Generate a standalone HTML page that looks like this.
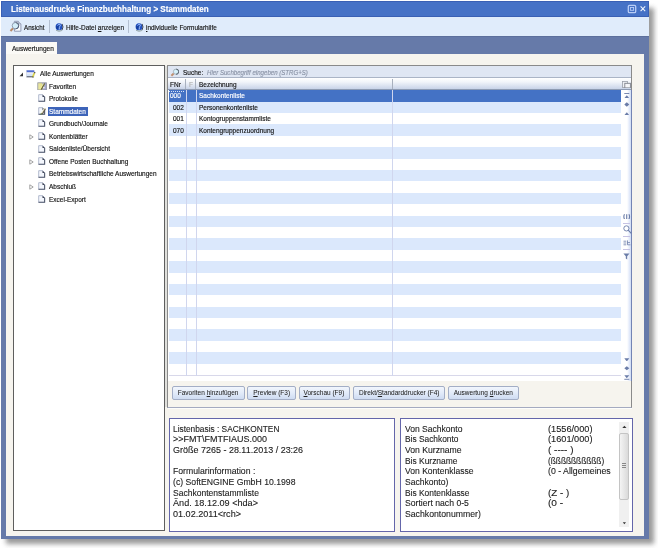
<!DOCTYPE html><html><head><meta charset="utf-8"><style>
*{margin:0;padding:0;box-sizing:border-box}
html,body{width:658px;height:548px;overflow:hidden;background:#fff;font-family:"Liberation Sans",sans-serif;position:relative}
.a{position:absolute}
.t{position:absolute;white-space:nowrap;color:#141414;-webkit-text-stroke:.16px currentColor}
.it{position:absolute;white-space:nowrap;color:#222}
</style></head><body><div id="root" style="position:absolute;left:0;top:0;width:658px;height:548px;overflow:hidden;background:#fff">
<div class="a" style="left:6px;top:8px;width:648px;height:536px;background:#808080;filter:blur(2.6px);opacity:.8"></div>
<div class="a" style="left:1px;top:1px;width:648px;height:538px;background:#667aa9"></div>
<div class="a" style="left:1px;top:1px;width:648px;height:16px;background:#4672c6;border:1px solid #3a60b4"></div>
<div class="t" style="left:10.70px;top:3.82px;font-size:8.6px;line-height:10px;transform:scaleX(0.9377);transform-origin:0 0;color:#fff;font-weight:bold">Listenausdrucke Finanzbuchhaltung &gt; Stammdaten</div>
<div class="a" style="left:1px;top:17px;width:648px;height:19px;background:#e0ecfb"></div>
<div class="a" style="left:1px;top:36px;width:648px;height:1px;background:#5c6f9c"></div>
<div class="t" style="left:23.90px;top:22.57px;font-size:7.3px;line-height:10px;transform:scaleX(0.8522);transform-origin:0 0">Ansicht</div>
<div class="a" style="left:48.5px;top:20px;width:1px;height:13px;background:#b4c0d2"></div>
<div class="t" style="left:65.50px;top:22.57px;font-size:7.3px;line-height:10px;transform:scaleX(0.8825);transform-origin:0 0">Hilfe-Datei <u>a</u>nzeigen</div>
<div class="a" style="left:128px;top:20px;width:1px;height:13px;background:#b4c0d2"></div>
<div class="t" style="left:145.50px;top:22.57px;font-size:7.3px;line-height:10px;transform:scaleX(0.8771);transform-origin:0 0"><u>i</u>ndividuelle Formularhilfe</div>
<div class="a" style="left:6px;top:42px;width:51px;height:13px;background:#fbfaf6"></div>
<div class="a" style="left:6px;top:54px;width:638px;height:482px;background:#f6f4ee"></div>
<div class="t" style="left:11.70px;top:44.07px;font-size:7.3px;line-height:10px;transform:scaleX(0.8981);transform-origin:0 0">Auswertungen</div>
<div class="a" style="left:13px;top:65px;width:152px;height:466px;background:#fff;border:1px solid #5e5e5e"></div>
<div class="a" style="left:165px;top:66px;width:2px;height:341px;background:#e0e0dc"></div>
<div class="t" style="left:39.50px;top:69.07px;font-size:7.3px;line-height:10px;transform:scaleX(0.89);transform-origin:0 0">Alle Auswertungen</div>
<div class="t" style="left:49.30px;top:81.62px;font-size:7.3px;line-height:10px;transform:scaleX(0.89);transform-origin:0 0">Favoriten</div>
<div class="t" style="left:49.30px;top:94.17px;font-size:7.3px;line-height:10px;transform:scaleX(0.89);transform-origin:0 0">Protokolle</div>
<div class="a" style="left:48.2px;top:107.0px;width:39.7px;height:8.8px;background:#3d64b9"></div>
<div class="t" style="left:49.30px;top:106.72px;font-size:7.3px;line-height:10px;transform:scaleX(0.89);transform-origin:0 0;color:#fff">Stammdaten</div>
<div class="t" style="left:49.30px;top:119.27px;font-size:7.3px;line-height:10px;transform:scaleX(0.89);transform-origin:0 0">Grundbuch/Journale</div>
<div class="t" style="left:49.30px;top:131.82px;font-size:7.3px;line-height:10px;transform:scaleX(0.89);transform-origin:0 0">Kontenbl&auml;tter</div>
<div class="t" style="left:49.30px;top:144.37px;font-size:7.3px;line-height:10px;transform:scaleX(0.89);transform-origin:0 0">Saldenliste/&Uuml;bersicht</div>
<div class="t" style="left:49.30px;top:156.92px;font-size:7.3px;line-height:10px;transform:scaleX(0.89);transform-origin:0 0">Offene Posten Buchhaltung</div>
<div class="t" style="left:49.30px;top:169.47px;font-size:7.3px;line-height:10px;transform:scaleX(0.89);transform-origin:0 0">Betriebswirtschaftliche Auswertungen</div>
<div class="t" style="left:49.30px;top:182.02px;font-size:7.3px;line-height:10px;transform:scaleX(0.89);transform-origin:0 0">Abschlu&szlig;</div>
<div class="t" style="left:49.30px;top:194.57px;font-size:7.3px;line-height:10px;transform:scaleX(0.89);transform-origin:0 0">Excel-Export</div>
<div class="a" style="left:167px;top:65px;width:465px;height:343px;background:#f6f4ee;border:1px solid #8a8a8a;border-bottom-color:#a4aac0"></div>
<div class="a" style="left:168px;top:408px;width:464px;height:1px;background:#fdfdfb"></div>
<div class="a" style="left:168px;top:66px;width:463px;height:12px;background:#dfe6f3;border-bottom:1px solid #aab4c6"></div>
<div class="t" style="left:183.10px;top:67.57px;font-size:7.3px;line-height:10px;transform:scaleX(0.8891);transform-origin:0 0">Suche:</div>
<div class="t" style="left:207.20px;top:67.57px;font-size:7.3px;line-height:10px;transform:scaleX(0.8363);transform-origin:0 0;color:#8a93a6;font-style:italic">Hier Suchbegriff eingeben (STRG+S)</div>
<div class="a" style="left:168px;top:78px;width:463px;height:12px;background:linear-gradient(#ffffff,#f2f5fa 35%,#c8d3e8);border-bottom:1px solid #8e9bb3"></div>
<div class="t" style="left:169.80px;top:80.17px;font-size:7.3px;line-height:10px;transform:scaleX(0.89);transform-origin:0 0">FNr</div>
<div class="t" style="left:188.80px;top:80.17px;font-size:7.3px;line-height:10px;transform:scaleX(0.89);transform-origin:0 0;color:#b0b0b0">F</div>
<div class="t" style="left:198.70px;top:80.17px;font-size:7.3px;line-height:10px;transform:scaleX(0.89);transform-origin:0 0">Bezeichnung</div>
<div class="a" style="left:185px;top:79px;width:1px;height:10px;background:#a8b0be"></div>
<div class="a" style="left:195px;top:79px;width:1px;height:10px;background:#a8b0be"></div>
<div class="a" style="left:392px;top:79px;width:1px;height:10px;background:#a8b0be"></div>
<div class="a" style="left:168px;top:90px;width:453px;height:291px;background:#fff"></div>
<div class="a" style="left:169px;top:90.3px;width:452px;height:11.39px;background:#4472c5"></div>
<div class="a" style="left:169px;top:101.69px;width:452px;height:11.39px;background:#dbe8fc"></div>
<div class="a" style="left:169px;top:113.08px;width:452px;height:11.39px;background:#ffffff"></div>
<div class="a" style="left:169px;top:124.47px;width:452px;height:11.39px;background:#dbe8fc"></div>
<div class="a" style="left:169px;top:135.86px;width:452px;height:11.39px;background:#ffffff"></div>
<div class="a" style="left:169px;top:147.25px;width:452px;height:11.39px;background:#dbe8fc"></div>
<div class="a" style="left:169px;top:158.64px;width:452px;height:11.39px;background:#ffffff"></div>
<div class="a" style="left:169px;top:170.03px;width:452px;height:11.39px;background:#dbe8fc"></div>
<div class="a" style="left:169px;top:181.42px;width:452px;height:11.39px;background:#ffffff"></div>
<div class="a" style="left:169px;top:192.81px;width:452px;height:11.39px;background:#dbe8fc"></div>
<div class="a" style="left:169px;top:204.2px;width:452px;height:11.39px;background:#ffffff"></div>
<div class="a" style="left:169px;top:215.59px;width:452px;height:11.39px;background:#dbe8fc"></div>
<div class="a" style="left:169px;top:226.98px;width:452px;height:11.39px;background:#ffffff"></div>
<div class="a" style="left:169px;top:238.37px;width:452px;height:11.39px;background:#dbe8fc"></div>
<div class="a" style="left:169px;top:249.76px;width:452px;height:11.39px;background:#ffffff"></div>
<div class="a" style="left:169px;top:261.15px;width:452px;height:11.39px;background:#dbe8fc"></div>
<div class="a" style="left:169px;top:272.54px;width:452px;height:11.39px;background:#ffffff"></div>
<div class="a" style="left:169px;top:283.93px;width:452px;height:11.39px;background:#dbe8fc"></div>
<div class="a" style="left:169px;top:295.32px;width:452px;height:11.39px;background:#ffffff"></div>
<div class="a" style="left:169px;top:306.71px;width:452px;height:11.39px;background:#dbe8fc"></div>
<div class="a" style="left:169px;top:318.1px;width:452px;height:11.39px;background:#ffffff"></div>
<div class="a" style="left:169px;top:329.49px;width:452px;height:11.39px;background:#dbe8fc"></div>
<div class="a" style="left:169px;top:340.88px;width:452px;height:11.39px;background:#ffffff"></div>
<div class="a" style="left:169px;top:352.27px;width:452px;height:11.39px;background:#dbe8fc"></div>
<div class="a" style="left:169px;top:363.66px;width:452px;height:11.39px;background:#ffffff"></div>
<div class="a" style="left:169px;top:375.2px;width:452px;height:1px;background:#d8d8ea"></div>
<div class="a" style="left:169px;top:91px;width:16px;height:1px;background-image:linear-gradient(90deg,#fff 50%,transparent 50%);background-size:2px 1px;opacity:.8"></div>
<div class="a" style="left:631px;top:90px;width:1px;height:291px;background:#7384b4"></div>
<div class="a" style="left:186px;top:90px;width:1px;height:286px;background:#d0d6ee"></div>
<div class="a" style="left:195.5px;top:90px;width:1px;height:286px;background:#d0d6ee"></div>
<div class="a" style="left:392px;top:90px;width:1px;height:286px;background:#d0d6ee"></div>
<div class="t" style="left:170.20px;top:91.47px;font-size:7.3px;line-height:10px;transform:scaleX(0.89);transform-origin:0 0;color:#fff">000</div>
<div class="t" style="left:198.80px;top:91.47px;font-size:7.3px;line-height:10px;transform:scaleX(0.89);transform-origin:0 0;color:#fff">Sachkontenliste</div>
<div class="t" style="left:172.90px;top:102.86px;font-size:7.3px;line-height:10px;transform:scaleX(0.89);transform-origin:0 0">002</div>
<div class="t" style="left:198.80px;top:102.86px;font-size:7.3px;line-height:10px;transform:scaleX(0.89);transform-origin:0 0">Personenkontenliste</div>
<div class="t" style="left:172.90px;top:114.25px;font-size:7.3px;line-height:10px;transform:scaleX(0.89);transform-origin:0 0">001</div>
<div class="t" style="left:198.80px;top:114.25px;font-size:7.3px;line-height:10px;transform:scaleX(0.89);transform-origin:0 0">Kontogruppenstammliste</div>
<div class="t" style="left:172.90px;top:125.64px;font-size:7.3px;line-height:10px;transform:scaleX(0.89);transform-origin:0 0">070</div>
<div class="t" style="left:198.80px;top:125.64px;font-size:7.3px;line-height:10px;transform:scaleX(0.89);transform-origin:0 0">Kontengruppenzuordnung</div>
<div class="a" style="left:621px;top:90px;width:10px;height:291px;background:linear-gradient(90deg,#ffffff 60%,#e8eefb 80%,#cfdcf4)"></div>
<div class="a" style="left:171.6px;top:386px;width:73.0px;height:14px;border:1px solid #a3aec6;border-radius:2px;background:linear-gradient(#f2f6fd,#e2ebf9 50%,#cfdcf2)"></div>
<div class="t" style="left:171.6px;width:73.0px;top:387.67px;line-height:10px;font-size:7.3px;text-align:center;-webkit-text-stroke:.04px currentColor;color:#222"><span style="display:inline-block;transform:scaleX(0.89)">Favoriten <u>h</u>inzuf&uuml;gen</span></div>
<div class="a" style="left:247.4px;top:386px;width:48.3px;height:14px;border:1px solid #a3aec6;border-radius:2px;background:linear-gradient(#f2f6fd,#e2ebf9 50%,#cfdcf2)"></div>
<div class="t" style="left:247.4px;width:48.3px;top:387.67px;line-height:10px;font-size:7.3px;text-align:center;-webkit-text-stroke:.04px currentColor;color:#222"><span style="display:inline-block;transform:scaleX(0.89)"><u>P</u>review (F3)</span></div>
<div class="a" style="left:298.5px;top:386px;width:51.7px;height:14px;border:1px solid #a3aec6;border-radius:2px;background:linear-gradient(#f2f6fd,#e2ebf9 50%,#cfdcf2)"></div>
<div class="t" style="left:298.5px;width:51.7px;top:387.67px;line-height:10px;font-size:7.3px;text-align:center;-webkit-text-stroke:.04px currentColor;color:#222"><span style="display:inline-block;transform:scaleX(0.89)"><u>V</u>orschau (F9)</span></div>
<div class="a" style="left:352.8px;top:386px;width:92.7px;height:14px;border:1px solid #a3aec6;border-radius:2px;background:linear-gradient(#f2f6fd,#e2ebf9 50%,#cfdcf2)"></div>
<div class="t" style="left:352.8px;width:92.7px;top:387.67px;line-height:10px;font-size:7.3px;text-align:center;-webkit-text-stroke:.04px currentColor;color:#222"><span style="display:inline-block;transform:scaleX(0.89)">Direkt/<u>S</u>tandarddrucker (F4)</span></div>
<div class="a" style="left:447.9px;top:386px;width:71.4px;height:14px;border:1px solid #a3aec6;border-radius:2px;background:linear-gradient(#f2f6fd,#e2ebf9 50%,#cfdcf2)"></div>
<div class="t" style="left:447.9px;width:71.4px;top:387.67px;line-height:10px;font-size:7.3px;text-align:center;-webkit-text-stroke:.04px currentColor;color:#222"><span style="display:inline-block;transform:scaleX(0.89)">Auswertung <u>d</u>rucken</span></div>
<div class="a" style="left:169px;top:418px;width:226px;height:114px;background:#fff;border:1px solid #6466aa"></div>
<div class="a" style="left:400px;top:418px;width:233px;height:114px;background:#fff;border:1px solid #6466aa"></div>
<div class="t" style="left:173.30px;top:423.67px;font-size:9.6px;line-height:10px;transform:scaleX(0.8677);transform-origin:0 0;color:#1c1c1c;-webkit-text-stroke:.12px currentColor">Listenbasis : SACHKONTEN</div>
<div class="t" style="left:173.30px;top:434.33px;font-size:9.6px;line-height:10px;transform:scaleX(0.9388);transform-origin:0 0;color:#1c1c1c;-webkit-text-stroke:.12px currentColor">&gt;&gt;FMT\FMTFIAUS.000</div>
<div class="t" style="left:173.30px;top:444.99px;font-size:9.6px;line-height:10px;transform:scaleX(0.9358);transform-origin:0 0;color:#1c1c1c;-webkit-text-stroke:.12px currentColor">Gr&ouml;&szlig;e 7265 - 28.11.2013 / 23:26</div>
<div class="t" style="left:173.30px;top:466.31px;font-size:9.6px;line-height:10px;transform:scaleX(0.9027);transform-origin:0 0;color:#1c1c1c;-webkit-text-stroke:.12px currentColor">Formularinformation :</div>
<div class="t" style="left:173.30px;top:476.97px;font-size:9.6px;line-height:10px;transform:scaleX(0.9045);transform-origin:0 0;color:#1c1c1c;-webkit-text-stroke:.12px currentColor">(c) SoftENGINE GmbH 10.1998</div>
<div class="t" style="left:173.30px;top:487.63px;font-size:9.6px;line-height:10px;transform:scaleX(0.89);transform-origin:0 0;color:#1c1c1c;-webkit-text-stroke:.12px currentColor">Sachkontenstammliste</div>
<div class="t" style="left:173.30px;top:498.29px;font-size:9.6px;line-height:10px;transform:scaleX(0.9484);transform-origin:0 0;color:#1c1c1c;-webkit-text-stroke:.12px currentColor">&Auml;nd. 18.12.09 &lt;hda&gt;</div>
<div class="t" style="left:173.30px;top:508.95px;font-size:9.6px;line-height:10px;transform:scaleX(0.9465);transform-origin:0 0;color:#1c1c1c;-webkit-text-stroke:.12px currentColor">01.02.2011&lt;rch&gt;</div>
<div class="t" style="left:404.50px;top:423.67px;font-size:9.6px;line-height:10px;transform:scaleX(0.8908);transform-origin:0 0;color:#1c1c1c;-webkit-text-stroke:.12px currentColor">Von Sachkonto</div>
<div class="t" style="left:547.70px;top:423.67px;font-size:9.6px;line-height:10px;transform:scaleX(0.9589);transform-origin:0 0;color:#1c1c1c;-webkit-text-stroke:.12px currentColor">(1556/000)</div>
<div class="t" style="left:404.50px;top:434.33px;font-size:9.6px;line-height:10px;transform:scaleX(0.8721);transform-origin:0 0;color:#1c1c1c;-webkit-text-stroke:.12px currentColor">Bis Sachkonto</div>
<div class="t" style="left:547.70px;top:434.33px;font-size:9.6px;line-height:10px;transform:scaleX(0.9589);transform-origin:0 0;color:#1c1c1c;-webkit-text-stroke:.12px currentColor">(1601/000)</div>
<div class="t" style="left:404.50px;top:444.99px;font-size:9.6px;line-height:10px;transform:scaleX(0.8993);transform-origin:0 0;color:#1c1c1c;-webkit-text-stroke:.12px currentColor">Von Kurzname</div>
<div class="t" style="left:547.70px;top:444.99px;font-size:9.6px;line-height:10px;transform:scaleX(1.0408);transform-origin:0 0;color:#1c1c1c;-webkit-text-stroke:.12px currentColor">( ---- )</div>
<div class="t" style="left:404.50px;top:455.65px;font-size:9.6px;line-height:10px;transform:scaleX(0.8774);transform-origin:0 0;color:#1c1c1c;-webkit-text-stroke:.12px currentColor">Bis Kurzname</div>
<div class="t" style="left:547.70px;top:455.65px;font-size:9.6px;line-height:10px;transform:scaleX(0.8646);transform-origin:0 0;color:#1c1c1c;-webkit-text-stroke:.12px currentColor">(&szlig;&szlig;&szlig;&szlig;&szlig;&szlig;&szlig;&szlig;&szlig;&szlig;)</div>
<div class="t" style="left:404.50px;top:466.31px;font-size:9.6px;line-height:10px;transform:scaleX(0.8918);transform-origin:0 0;color:#1c1c1c;-webkit-text-stroke:.12px currentColor">Von Kontenklasse</div>
<div class="t" style="left:547.70px;top:466.31px;font-size:9.6px;line-height:10px;transform:scaleX(0.9114);transform-origin:0 0;color:#1c1c1c;-webkit-text-stroke:.12px currentColor">(0 - Allgemeines</div>
<div class="t" style="left:404.50px;top:476.97px;font-size:9.6px;line-height:10px;transform:scaleX(0.8922);transform-origin:0 0;color:#1c1c1c;-webkit-text-stroke:.12px currentColor">Sachkonto)</div>
<div class="t" style="left:404.50px;top:487.63px;font-size:9.6px;line-height:10px;transform:scaleX(0.8764);transform-origin:0 0;color:#1c1c1c;-webkit-text-stroke:.12px currentColor">Bis Kontenklasse</div>
<div class="t" style="left:547.70px;top:487.63px;font-size:9.6px;line-height:10px;transform:scaleX(1.0202);transform-origin:0 0;color:#1c1c1c;-webkit-text-stroke:.12px currentColor">(Z - )</div>
<div class="t" style="left:404.50px;top:498.29px;font-size:9.6px;line-height:10px;transform:scaleX(0.9008);transform-origin:0 0;color:#1c1c1c;-webkit-text-stroke:.12px currentColor">Sortiert nach 0-5</div>
<div class="t" style="left:547.70px;top:498.29px;font-size:9.6px;line-height:10px;transform:scaleX(1.0562);transform-origin:0 0;color:#1c1c1c;-webkit-text-stroke:.12px currentColor">(0 -</div>
<div class="t" style="left:404.50px;top:508.95px;font-size:9.6px;line-height:10px;transform:scaleX(0.9054);transform-origin:0 0;color:#1c1c1c;-webkit-text-stroke:.12px currentColor">Sachkontonummer)</div>
<div class="a" style="left:619px;top:422px;width:10px;height:105px;background:#f0f0f0"></div>
<div class="a" style="left:619px;top:433px;width:10px;height:67px;background:linear-gradient(90deg,#f4f4f4,#dadada);border:1px solid #c4c4c4;border-radius:2px"></div>
<svg class="a" style="left:627px;top:4px" width="10" height="10" viewBox="0 0 10 10"><rect x="1.3" y="1.3" width="7.4" height="7.4" rx="1.2" fill="none" stroke="#b9cdf6" stroke-width="1.3"/><rect x="3.4" y="3.5" width="3.2" height="2.8" fill="none" stroke="#b9cdf6" stroke-width="0.9"/></svg>
<svg class="a" style="left:639px;top:5px" width="8" height="8" viewBox="0 0 8 8"><path d="M1.6 1.4L6.2 6.1M6.2 1.4L1.6 6.1" stroke="#f4f8ff" stroke-width="1.05"/></svg>
<svg class="a" style="left:9px;top:20px" width="14" height="13" viewBox="0 0 14 13"><path d="M5.4 1.3h3.9l2.6 2.6v7.3H5.4z" fill="#fbfcff" stroke="#8f99b4" stroke-width="1"/><path d="M9.3 1.3v2.6h2.6" fill="#d0d6e6" stroke="#8f99b4" stroke-width=".8"/><circle cx="6.4" cy="5.7" r="3.2" fill="#d4eefa" stroke="#8894a8" stroke-width=".9"/><path d="M6.6 2.5A3.2 3.2 0 0 1 6.5 8.9" stroke="#56627a" stroke-width="1" fill="none"/><path d="M4 8.4L1.5 11" stroke="#b88a68" stroke-width="2"/></svg>
<svg class="a" style="left:54.5px;top:22px" width="10" height="10" viewBox="0 0 10 10"><ellipse cx="4" cy="4.8" rx="3.4" ry="3.5" fill="#2250c0"/><ellipse cx="2.5" cy="5.2" rx="1.3" ry="2.2" fill="#173f9e"/><path d="M2.6 3.6Q3.3 1.9 4.8 2.3Q6.1 3.1 4.7 4.6Q4.2 5.2 4.2 7.6" stroke="#a8c6fa" stroke-width="1" fill="none"/><path d="M7.1 1.9Q9 4.9 6.9 8.3" stroke="#3a4256" stroke-width="1" fill="none"/><path d="M1.2 8.4Q4 9.9 6.7 8.6" stroke="#788c88" stroke-width=".8" fill="none"/></svg>
<svg class="a" style="left:134.5px;top:22px" width="10" height="10" viewBox="0 0 10 10"><ellipse cx="4" cy="4.8" rx="3.4" ry="3.5" fill="#2250c0"/><ellipse cx="2.5" cy="5.2" rx="1.3" ry="2.2" fill="#173f9e"/><path d="M2.6 3.6Q3.3 1.9 4.8 2.3Q6.1 3.1 4.7 4.6Q4.2 5.2 4.2 7.6" stroke="#a8c6fa" stroke-width="1" fill="none"/><path d="M7.1 1.9Q9 4.9 6.9 8.3" stroke="#3a4256" stroke-width="1" fill="none"/><path d="M1.2 8.4Q4 9.9 6.7 8.6" stroke="#788c88" stroke-width=".8" fill="none"/></svg>
<svg class="a" style="left:19px;top:71.5px" width="5" height="5" viewBox="0 0 5 5"><path d="M4 0.5V4.3H0.5z" fill="#333"/></svg>
<svg class="a" style="left:28.8px;top:133.55px" width="5" height="6" viewBox="0 0 5 6"><path d="M0.8 0.8L4.2 3L0.8 5.2z" fill="#fff" stroke="#999" stroke-width=".9"/></svg>
<svg class="a" style="left:28.8px;top:158.65px" width="5" height="6" viewBox="0 0 5 6"><path d="M0.8 0.8L4.2 3L0.8 5.2z" fill="#fff" stroke="#999" stroke-width=".9"/></svg>
<svg class="a" style="left:28.8px;top:183.75px" width="5" height="6" viewBox="0 0 5 6"><path d="M0.8 0.8L4.2 3L0.8 5.2z" fill="#fff" stroke="#999" stroke-width=".9"/></svg>
<svg class="a" style="left:26px;top:69.5px" width="10" height="8" viewBox="0 0 10 8"><rect x=".4" y=".3" width="7.9" height="6.9" fill="#eeeef5"/><rect x=".4" y="3.8" width="7.9" height="2.8" fill="#d6e4f7"/><rect x=".4" y=".3" width="7.9" height="1.9" fill="#4e6cd2"/><path d="M.4 6.8H8" stroke="#474e60" stroke-width="1"/><path d="M.4 .3V7" stroke="#c8cedc" stroke-width=".6"/><path d="M8.6 2.6L6.6 7" stroke="#dcd44c" stroke-width="1.7"/><path d="M9.1 2.2L8.4 3" stroke="#3a3a3a" stroke-width="1.2"/><path d="M6.9 6.6L6.5 7.3" stroke="#3a3a30" stroke-width="1.2"/></svg>
<svg class="a" style="left:36.5px;top:81.5px" width="10" height="8.5" viewBox="0 0 10 8.5"><defs><linearGradient id="fg" x1="0" x2="1"><stop offset="0" stop-color="#eeeaa8"/><stop offset=".45" stop-color="#e4e08a"/><stop offset=".55" stop-color="#b8b8cc"/><stop offset="1" stop-color="#9c9fcc"/></linearGradient></defs><rect x=".8" y=".8" width="8.6" height="7.2" fill="url(#fg)" stroke="#8e909c" stroke-width=".8"/><path d="M7.6 1.4L4.2 7.6" stroke="#6d6b3c" stroke-width="1.3"/><path d="M6.4 1.6L3.2 6.8" stroke="#f4f0a0" stroke-width=".9"/><circle cx="6.9" cy="5.6" r=".9" fill="#e8e8f6"/></svg>
<svg class="a" style="left:37.6px;top:94.3px" width="8" height="8.3" viewBox="0 0 8 8.3"><path d="M.7 .7H4.6L6.6 2.7V7.4H.7z" fill="#f4f7fd" stroke="#aab2c8" stroke-width=".9"/><path d="M.5 7.3H6.6V2.7" fill="none" stroke="#565e70" stroke-width="1.1"/><path d="M4.5 .6L6.8 2.9L4.5 3z" fill="#3a4052"/></svg>
<svg class="a" style="left:37.6px;top:106.8px" width="8" height="8.3" viewBox="0 0 8 8.3"><path d="M.7 .7H4.6L6.6 2.7V7.4H.7z" fill="#f4f7fd" stroke="#aab2c8" stroke-width=".9"/><path d="M.5 7.3H6.6V2.7" fill="none" stroke="#565e70" stroke-width="1.1"/><path d="M4.5 .6L6.8 2.9L4.5 3z" fill="#3a4052"/><path d="M6.9 1.2L3.3 7" stroke="#f2eed0" stroke-width="1.6"/><path d="M7.4 1.8L4.2 7.2" stroke="#5e5648" stroke-width="1.1"/><path d="M3.6 6.4L2.8 7.5" stroke="#4a6a30" stroke-width="1.2"/></svg>
<svg class="a" style="left:37.6px;top:119.4px" width="8" height="8.3" viewBox="0 0 8 8.3"><path d="M.7 .7H4.6L6.6 2.7V7.4H.7z" fill="#f4f7fd" stroke="#aab2c8" stroke-width=".9"/><path d="M.5 7.3H6.6V2.7" fill="none" stroke="#565e70" stroke-width="1.1"/><path d="M4.5 .6L6.8 2.9L4.5 3z" fill="#3a4052"/></svg>
<svg class="a" style="left:37.6px;top:131.9px" width="8" height="8.3" viewBox="0 0 8 8.3"><path d="M.7 .7H4.6L6.6 2.7V7.4H.7z" fill="#f4f7fd" stroke="#aab2c8" stroke-width=".9"/><path d="M.5 7.3H6.6V2.7" fill="none" stroke="#565e70" stroke-width="1.1"/><path d="M4.5 .6L6.8 2.9L4.5 3z" fill="#3a4052"/></svg>
<svg class="a" style="left:37.6px;top:144.5px" width="8" height="8.3" viewBox="0 0 8 8.3"><path d="M.7 .7H4.6L6.6 2.7V7.4H.7z" fill="#f4f7fd" stroke="#aab2c8" stroke-width=".9"/><path d="M.5 7.3H6.6V2.7" fill="none" stroke="#565e70" stroke-width="1.1"/><path d="M4.5 .6L6.8 2.9L4.5 3z" fill="#3a4052"/></svg>
<svg class="a" style="left:37.6px;top:157.0px" width="8" height="8.3" viewBox="0 0 8 8.3"><path d="M.7 .7H4.6L6.6 2.7V7.4H.7z" fill="#f4f7fd" stroke="#aab2c8" stroke-width=".9"/><path d="M.5 7.3H6.6V2.7" fill="none" stroke="#565e70" stroke-width="1.1"/><path d="M4.5 .6L6.8 2.9L4.5 3z" fill="#3a4052"/></svg>
<svg class="a" style="left:37.6px;top:169.6px" width="8" height="8.3" viewBox="0 0 8 8.3"><path d="M.7 .7H4.6L6.6 2.7V7.4H.7z" fill="#f4f7fd" stroke="#aab2c8" stroke-width=".9"/><path d="M.5 7.3H6.6V2.7" fill="none" stroke="#565e70" stroke-width="1.1"/><path d="M4.5 .6L6.8 2.9L4.5 3z" fill="#3a4052"/></svg>
<svg class="a" style="left:37.6px;top:182.2px" width="8" height="8.3" viewBox="0 0 8 8.3"><path d="M.7 .7H4.6L6.6 2.7V7.4H.7z" fill="#f4f7fd" stroke="#aab2c8" stroke-width=".9"/><path d="M.5 7.3H6.6V2.7" fill="none" stroke="#565e70" stroke-width="1.1"/><path d="M4.5 .6L6.8 2.9L4.5 3z" fill="#3a4052"/></svg>
<svg class="a" style="left:37.6px;top:194.7px" width="8" height="8.3" viewBox="0 0 8 8.3"><path d="M.7 .7H4.6L6.6 2.7V7.4H.7z" fill="#f4f7fd" stroke="#aab2c8" stroke-width=".9"/><path d="M.5 7.3H6.6V2.7" fill="none" stroke="#565e70" stroke-width="1.1"/><path d="M4.5 .6L6.8 2.9L4.5 3z" fill="#3a4052"/></svg>
<svg class="a" style="left:170px;top:67.5px" width="9" height="9" viewBox="0 0 9 9"><path d="M3.8 5.4L1.4 7.8" stroke="#c09070" stroke-width="2"/><circle cx="6" cy="3.7" r="2.6" fill="#d6f2fb" stroke="#9aa6b0" stroke-width=".8"/><path d="M6.2 1.1A2.6 2.6 0 0 1 6 6.3" stroke="#5a6670" stroke-width="1" fill="none"/></svg>
<svg class="a" style="left:621.5px;top:80.5px" width="9" height="7.5" viewBox="0 0 9 7.5"><rect x=".5" y=".5" width="5" height="6" fill="#eef0f4" stroke="#9a9ea8" stroke-width=".8"/><rect x="2.8" y="2.3" width="5.6" height="4.6" fill="#f4f5f8" stroke="#7f838c" stroke-width=".9"/></svg>
<svg class="a" style="left:623.5px;top:92.5px" width="6" height="5.5" viewBox="0 0 6 5.5"><path d="M.3 .5H5.3" stroke="#6a7ca8" stroke-width=".9"/><path d="M.3 5.2L2.8 2.3L5.3 5.2z" fill="#6a7ca8"/></svg>
<svg class="a" style="left:623.5px;top:102px" width="6" height="5" viewBox="0 0 6 5"><path d="M2.8 .2L5.3 2.5L2.8 4.8L.3 2.5z" fill="#6a7ca8"/></svg>
<svg class="a" style="left:623.5px;top:111.5px" width="6" height="3.5" viewBox="0 0 6 3.5"><path d="M.3 3.2L2.8 .3L5.3 3.2z" fill="#6a7ca8"/></svg>
<svg class="a" style="left:623px;top:213.5px" width="7.5" height="5.5" viewBox="0 0 7.5 5.5"><path d="M1.5 .3Q.2 2.7 1.5 5.2M3.7 .3V5.2M5.9 .3Q7.2 2.7 5.9 5.2" stroke="#6a7ca8" stroke-width="1.1" fill="none"/></svg>
<div class="a" style="left:623px;top:222.6px;width:6.5px;height:0.8px;background:#c6c3e4"></div>
<div class="a" style="left:623px;top:236.2px;width:6.5px;height:0.8px;background:#c6c3e4"></div>
<div class="a" style="left:623px;top:249.4px;width:6.5px;height:0.8px;background:#c6c3e4"></div>
<svg class="a" style="left:622.5px;top:225px" width="9" height="9" viewBox="0 0 9 9"><circle cx="3.4" cy="3.4" r="2.6" fill="none" stroke="#6a7ca8" stroke-width=".9"/><path d="M5.2 5.2L8.3 8.3" stroke="#6a7ca8" stroke-width="1.2"/></svg>
<svg class="a" style="left:623px;top:240px" width="8" height="6" viewBox="0 0 8 6"><path d="M.5 1.2H3.3M.5 3H3.3M.5 4.8H3.3M4.5 .4V4.8H7.4M4.5 2.6H7" stroke="#6a7ca8" stroke-width=".8" fill="none"/></svg>
<svg class="a" style="left:622.5px;top:252.5px" width="8" height="7" viewBox="0 0 8 7"><path d="M.4 .5H6.5L4.2 3.2V6.5L2.8 5.5V3.2z" fill="#6a7ca8"/></svg>
<svg class="a" style="left:623.5px;top:357.5px" width="6" height="3.8" viewBox="0 0 6 3.8"><path d="M.3 .3L2.8 3.5L5.3 .3z" fill="#6a7ca8"/></svg>
<svg class="a" style="left:623.5px;top:366px" width="6" height="4.5" viewBox="0 0 6 4.5"><path d="M2.8 .2L5.3 2.3L2.8 4.3L.3 2.3z" fill="#6a7ca8"/></svg>
<svg class="a" style="left:623.5px;top:375px" width="6" height="5" viewBox="0 0 6 5"><path d="M.3 .3L2.8 3.2L5.3 .3z" fill="#6a7ca8"/><path d="M.3 4.3H5.3" stroke="#6a7ca8" stroke-width=".9"/></svg>
<svg class="a" style="left:621.5px;top:425px" width="5" height="4" viewBox="0 0 5 4"><path d="M.3 3L2.4 .8L4.5 3z" fill="#333"/></svg>
<svg class="a" style="left:621.5px;top:521.5px" width="5" height="3" viewBox="0 0 5 3"><path d="M.8 .3H4L2.4 2.2z" fill="#333"/></svg>
<div class="a" style="left:622px;top:463px;width:4px;height:5px;border-top:1px solid #888;border-bottom:1px solid #888"></div>
<div class="a" style="left:622px;top:465px;width:4px;height:1px;background:#888"></div>
</div></body></html>
